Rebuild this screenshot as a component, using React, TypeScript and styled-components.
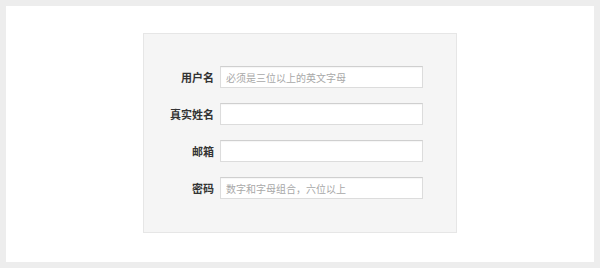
import styled, { createGlobalStyle } from "styled-components";

const GlobalStyle = createGlobalStyle`
  html, body {
    margin: 0;
    padding: 0;
    background: #ffffff;
  }
  * {
    box-sizing: border-box;
  }
`;

const Frame = styled.div`
  width: 600px;
  height: 268px;
  border: 6px solid #ededed;
  background: #ffffff;
  display: flex;
  justify-content: center;
  padding-top: 27px;
  font-family: "Noto Sans CJK SC", "Liberation Sans", sans-serif;
`;

const Panel = styled.form`
  width: 314px;
  height: 200px;
  margin-left: 0px;
  background: #f5f5f5;
  border: 1px solid #e6e6e6;
  padding: 32px 33px 0 0;
  display: flex;
  flex-direction: column;
  gap: 15px;
`;

const Row = styled.div`
  display: flex;
  align-items: center;
  gap: 6px;
`;

const Label = styled.label`
  width: 70px;
  text-align: right;
  font-size: 11px;
  font-weight: 700;
  color: #333333;
  line-height: 22px;
`;

const Field = styled.input`
  width: 203px;
  height: 22px;
  border: 1px solid #dcdcdc;
  border-top-color: #cfcfcf;
  background: #ffffff;
  padding: 0 5px;
  font-family: "Noto Sans CJK SC", "Liberation Sans", sans-serif;
  font-size: 10px;
  color: #333;
  outline: none;
  box-shadow: inset 0 1px 1px rgba(0, 0, 0, 0.04);

  &::placeholder {
    color: #a8a8a8;
  }
`;

const fields = [
  { label: "用户名", placeholder: "必须是三位以上的英文字母", type: "text" },
  { label: "真实姓名", placeholder: "", type: "text" },
  { label: "邮箱", placeholder: "", type: "email" },
  { label: "密码", placeholder: "数字和字母组合，六位以上", type: "password" },
];

export default function App() {
  return (
    <>
      <GlobalStyle />
      <Frame>
        <Panel onSubmit={(e) => e.preventDefault()}>
          {fields.map((f) => (
            <Row key={f.label}>
              <Label>{f.label}</Label>
              <Field type={f.type} placeholder={f.placeholder} />
            </Row>
          ))}
        </Panel>
      </Frame>
    </>
  );
}
